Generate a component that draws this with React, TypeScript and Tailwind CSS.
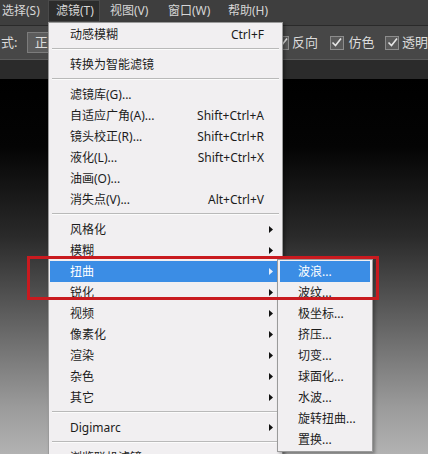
import React from "react";

type Item =
  | { sep: true }
  | { label: string; shortcut?: string; arrow?: boolean; active?: boolean };

const mainItems: Item[] = [
  { label: "动感模糊", shortcut: "Ctrl+F" },
  { sep: true },
  { label: "转换为智能滤镜" },
  { sep: true },
  { label: "滤镜库(G)..." },
  { label: "自适应广角(A)...", shortcut: "Shift+Ctrl+A" },
  { label: "镜头校正(R)...", shortcut: "Shift+Ctrl+R" },
  { label: "液化(L)...", shortcut: "Shift+Ctrl+X" },
  { label: "油画(O)..." },
  { label: "消失点(V)...", shortcut: "Alt+Ctrl+V" },
  { sep: true },
  { label: "风格化", arrow: true },
  { label: "模糊", arrow: true },
  { label: "扭曲", arrow: true, active: true },
  { label: "锐化", arrow: true },
  { label: "视频", arrow: true },
  { label: "像素化", arrow: true },
  { label: "渲染", arrow: true },
  { label: "杂色", arrow: true },
  { label: "其它", arrow: true },
  { sep: true },
  { label: "Digimarc", arrow: true },
  { sep: true },
  { label: "浏览联机滤镜..." },
];

const subItems = ["波浪...", "波纹...", "极坐标...", "挤压...", "切变...", "球面化...", "水波...", "旋转扭曲...", "置换..."];

const Arrow = ({ light }: { light?: boolean }) => (
  <svg width="4" height="7" viewBox="0 0 4 7" className="shrink-0">
    <path d="M0 0 L4 3.5 L0 7 Z" fill={light ? "#e8f0fb" : "#111"} />
  </svg>
);

const CheckBox = () => (
  <div className="w-[14px] h-[14px] bg-[#5a5a5a] border border-[#8c8c8c] flex items-center justify-center">
    <svg width="11" height="11" viewBox="0 0 11 11">
      <path d="M1.5 5.5 L4.5 8.5 L10 1.5" stroke="#e6e6e6" strokeWidth="1.6" fill="none" />
    </svg>
  </div>
);

const App = () => {
  return (
    <div className="relative w-[428px] h-[454px] overflow-hidden flex flex-col font-['Noto_Sans','Noto_Sans_CJK_SC',sans-serif] text-[12px]">
      {/* menu bar */}
      <div className="h-[26px] shrink-0 flex items-start bg-[#3e3e3e] border-b border-[#2a2a2a] text-[#d6d6d6]">
        <div className="w-[48px] h-[22px] flex items-center pl-[2px]">选择(S)</div>
        <div className="w-[52px] h-[22px] flex items-center pl-[7px] bg-[#2c2c2c] border border-[#4a4a4a]">滤镜(T)</div>
        <div className="w-[68px] h-[22px] flex items-center pl-[10px]">视图(V)</div>
        <div className="w-[60px] h-[22px] flex items-center">窗口(W)</div>
        <div className="h-[22px] flex items-center">帮助(H)</div>
      </div>

      {/* options bar */}
      <div className="h-[34px] shrink-0 flex items-center bg-[#474747] border-b border-[#5a5a5a] text-[#dcdcdc] text-[13px]">
        <div className="w-[27px] pl-px">式:</div>
        <div className="w-[70px] h-[21px] bg-[#5c5c5c] border border-[#7c7c7c] pl-[7px] flex items-center">正常</div>
        <div className="w-[181px]" />
        <CheckBox />
        <div className="ml-[3px] w-[38px]">反向</div>
        <CheckBox />
        <div className="ml-[5px] w-[37px]">仿色</div>
        <CheckBox />
        <div className="ml-[3px] whitespace-nowrap">透明</div>
      </div>

      <div className="h-[19px] shrink-0 bg-[#2b2b2b]" />

      {/* canvas */}
      <div className="flex-1 bg-[linear-gradient(to_bottom,#000_0%,#040404_18%,#2a2a2a_42%,#6a6a6a_68%,#9c9c9c_88%,#b2b2b2_100%)]" />

      {/* filter menu */}
      <div className="absolute left-[48px] top-[22px] w-[235px] h-[440px] bg-[#f1eff1] border border-[#9a9a9a] pt-[1px] text-[#1c1c1c] shadow-[2px_2px_3px_rgba(0,0,0,0.35)]">
        {mainItems.map((it, i) =>
          "sep" in it ? (
            <div key={i} className="h-[9px] pt-[3px] px-[3px]">
              <div className="h-px bg-[#b9b9b9]" />
              <div className="h-px bg-[#fbfbfb]" />
            </div>
          ) : (
            <div
              key={i}
              className={
                it.active
                  ? "h-[21px] mx-px flex items-center pl-[20px] pr-[8px] bg-[#3b8de5] text-white"
                  : "h-[21px] flex items-center pl-[21px] pr-[9px]"
              }
            >
              <span className="flex-1 whitespace-nowrap">{it.label}</span>
              {it.shortcut && <span className="mr-[9px] whitespace-nowrap">{it.shortcut}</span>}
              {it.arrow && <Arrow light={it.active} />}
            </div>
          )
        )}
      </div>

      {/* distort submenu */}
      <div className="absolute left-[277px] top-[259px] w-[96px] h-[193px] bg-[#f1eff1] border border-[#9a9a9a] pt-px text-[#1c1c1c] shadow-[2px_2px_3px_rgba(0,0,0,0.3)]">
        {subItems.map((s, i) => (
          <div
            key={s}
            className={
              i === 0
                ? "h-[21px] mx-[2px] flex items-center pl-[18px] bg-[#3b8de5] text-white"
                : "h-[21px] flex items-center pl-[20px]"
            }
          >
            {s}
          </div>
        ))}
      </div>

      {/* red annotation box */}
      <div className="absolute left-[27px] top-[256px] w-[352px] h-[44px] border-[3px] border-[#c91a1f]" />
    </div>
  );
};

export default App;
